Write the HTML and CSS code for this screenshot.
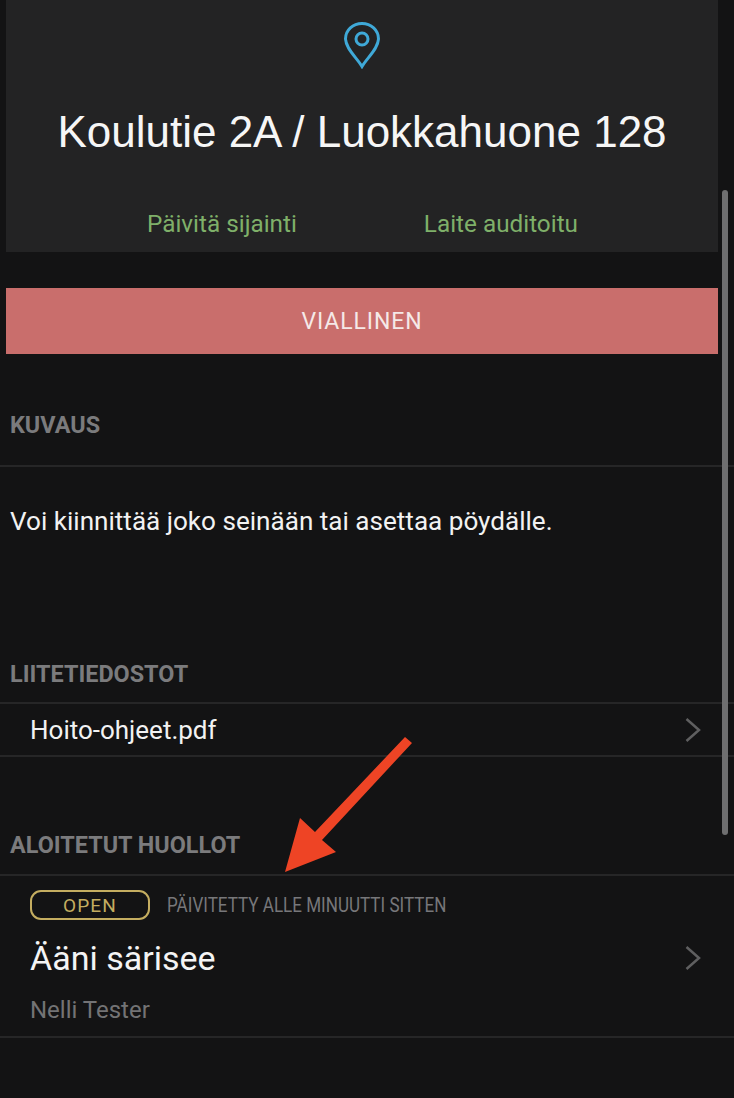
FILE: index.html
```html
<!DOCTYPE html>
<html lang="fi">
<head>
<meta charset="utf-8">
<title>Koulutie 2A</title>
<link rel="stylesheet" href="styles.css">
</head>
<body>
<main class="screen">
  <section class="card">
    <svg class="pin" viewBox="0 0 38 48" width="38" height="48" aria-hidden="true">
      <path d="M19 45.500 C14 37 3 28 2.500 18 C2.500 9 10 2.500 19 2.500 C28 2.500 35.500 9 35.500 18 C35 28 24 37 19 45.500 Z"/>
      <circle cx="19" cy="18" r="6"/>
    </svg>
    <h1 class="title">Koulutie 2A / Luokkahuone 128</h1>
    <div class="actions">
      <span class="action">Päivitä sijainti</span>
      <span class="action">Laite auditoitu</span>
    </div>
  </section>
  <div class="status">VIALLINEN</div>
  <h2 class="heading heading-desc">KUVAUS</h2>
  <p class="desc">Voi kiinnittää joko seinään tai asettaa pöydälle.</p>
  <h2 class="heading heading-files">LIITETIEDOSTOT</h2>
  <div class="row file">
    <span class="file-name">Hoito-ohjeet.pdf</span>
    <svg class="chev" viewBox="0 0 16 24" width="16" height="24" aria-hidden="true"><path d="M1.500 1 L14 12 L1.500 23"/></svg>
  </div>
  <h2 class="heading heading-work">ALOITETUT HUOLLOT</h2>
  <div class="row work">
    <div class="work-body">
      <div class="work-meta">
        <span class="badge">OPEN</span>
        <span class="updated">PÄIVITETTY ALLE MINUUTTI SITTEN</span>
      </div>
      <div class="work-title">Ääni särisee</div>
      <div class="work-author">Nelli Tester</div>
    </div>
    <svg class="chev" viewBox="0 0 16 24" width="16" height="24" aria-hidden="true"><path d="M1.500 1 L14 12 L1.500 23"/></svg>
  </div>
  <div class="scrollbar"></div>
  <svg class="arrow" viewBox="0 0 140 150" width="140" height="150" aria-hidden="true">
    <path d="M125 7 L132 13 L42 110 L56 122 L5 142 L20 88 L35 102 Z"/>
  </svg>
</main>
</body>
</html>
```
FILE: styles.css
```css
* { box-sizing: border-box; }
html, body { margin: 0; padding: 0; }
body {
  width: 734px;
  height: 1098px;
  overflow: hidden;
  background: #131314;
  font-family: Roboto, "Liberation Sans", sans-serif;
}
.screen { position: relative; width: 734px; height: 1098px; }
.card {
  margin: 0 16px 0 6px;
  height: 252px;
  background: #232324;
  padding-top: 21px;
  display: flex;
  flex-direction: column;
  align-items: center;
}
.pin { display: block; }
.pin path, .pin circle { fill: none; stroke: #3fa9d8; stroke-width: 3; }
.title {
  margin: 38px 0 0;
  font: 400 44px/50px "Liberation Sans", Arial, sans-serif;
  color: #f6f6f6;
  white-space: nowrap;
}
.actions { display: flex; justify-content: center; gap: 127px; margin-top: 53px; margin-left: 1px; }
.action { font-size: 24.300px; line-height: 28px; color: #7fb069; }
.status {
  margin: 36px 16px 0 6px;
  height: 66px;
  background: #c96e6c;
  color: #f5e9e8;
  font-size: 23px;
  letter-spacing: 0.900px;
  line-height: 68px;
  text-align: center;
}
.heading {
  margin: 0;
  padding-left: 10px;
  font-size: 23.400px;
  font-weight: 700;
  line-height: 28px;
  color: #7b7b7d;
  border-bottom: 2px solid #262627;
}
.heading-desc { margin-top: 57px; padding-bottom: 26px; }
.desc { margin: 0; padding: 39px 0 0 10px; font-size: 26.100px; line-height: 30px; color: #f2f2f2; height: 193px; }
.heading-files { padding-bottom: 14px; }
.row { display: flex; justify-content: space-between; padding: 0 33px 0 30px; border-bottom: 2px solid #262627; }
.file { height: 53px; align-items: center; }
.file-name { font-size: 26px; color: #f2f2f2; }
.chev { flex: none; }
.chev path { fill: none; stroke: #5f5f60; stroke-width: 2.500; }
.heading-work { margin-top: 74px; padding-bottom: 15px; }
.work { height: 162px; padding-top: 14px; }
.work > .chev { margin-top: 56px; }
.work-body { display: flex; flex-direction: column; }
.work-meta { display: flex; align-items: center; gap: 17px; }
.badge {
  width: 120px;
  height: 30px;
  border: 2px solid #c4ad60;
  border-radius: 11px;
  color: #c4ad60;
  font-size: 19px;
  font-weight: 400;
  letter-spacing: 1.200px;
  line-height: 27px;
  text-align: center;
}
.updated {
  display: inline-block;
  width: 279px;
  font-size: 20px;
  white-space: nowrap;
  color: #77777a;
  transform: scaleX(0.853);
  transform-origin: left center;
}
.work-title { margin-top: 18px; font-size: 34px; line-height: 40px; color: #f4f4f4; }
.work-author { margin-top: 18px; font-size: 24px; line-height: 28px; color: #737375; }
.scrollbar {
  position: absolute;
  left: 722px;
  top: 190px;
  width: 6px;
  height: 645px;
  border-radius: 3px;
  background: #6f6f70;
}
.arrow { position: absolute; left: 280px; top: 730px; }
.arrow path { fill: #ee4425; }
```
